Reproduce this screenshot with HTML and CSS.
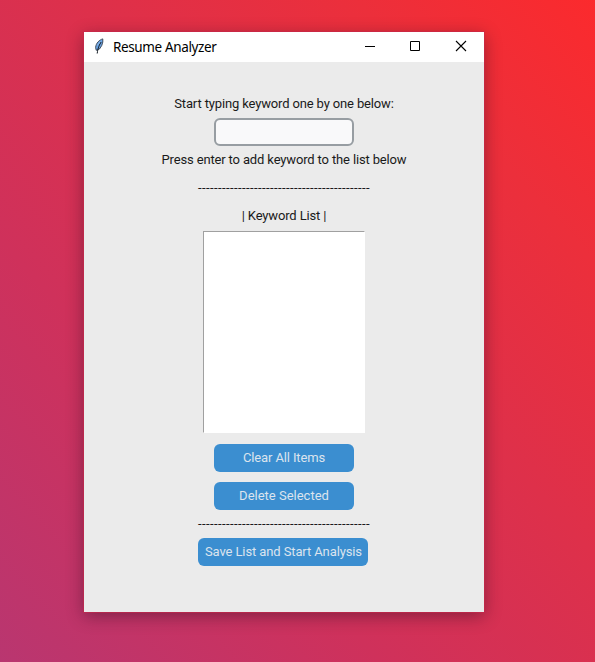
FILE: index.html
```html
<!DOCTYPE html>
<html lang="en">
<head>
<meta charset="utf-8">
<title>Resume Analyzer</title>
<link rel="stylesheet" href="styles.css">
</head>
<body>
<main class="window">
  <header class="titlebar">
    <svg class="feather" width="12" height="16" viewBox="0 0 12 16">
      <path d="M9.8 0.900C6.400 1.8 3 5 2.600 9.500L3.200 12.300L6.500 11L8.800 7.400L9.800 4Z" fill="#6ba3e2" stroke="#34404f" stroke-width="0.9"/>
      <path d="M8.200 4C6.500 6.500 4.900 9.500 4.200 15.500" fill="none" stroke="#101820" stroke-width="1"/>
      <path d="M4.400 7.500L7.200 3.600" stroke="#8bb8ea" stroke-width="1"/>
    </svg>
    <h1 class="title">Resume Analyzer</h1>
    <nav class="controls">
      <svg width="46" height="30" viewBox="0 0 46 30"><path d="M19 14.500H29" stroke="#000"/></svg>
      <svg width="46" height="30" viewBox="0 0 46 30"><path d="M18.500 9.500H27.500V18.500H18.500Z" fill="none" stroke="#000"/></svg>
      <svg width="46" height="30" viewBox="0 0 46 30"><path d="M18 9L28 19M28 9L18 19" stroke="#000" stroke-width="1.1"/></svg>
    </nav>
  </header>
  <section class="content">
    <label class="label" for="keyword">Start typing keyword one by one below:</label>
    <input class="entry" id="keyword" type="text">
    <p class="label">Press enter to add keyword to the list below</p>
    <p class="label dashes">-------------------------------------------</p>
    <p class="label">| Keyword List |</p>
    <div class="listbox"></div>
    <button class="button clear">Clear All Items</button>
    <button class="button delete">Delete Selected</button>
    <p class="label dashes">-------------------------------------------</p>
    <button class="button save">Save List and Start Analysis</button>
  </section>
</main>
</body>
</html>
```
FILE: styles.css
```css
* {
  box-sizing: border-box;
}

body {
  margin: 0;
  height: 662px;
  padding: 32px 0 0 84px;
  overflow: hidden;
  background: linear-gradient(to top right, #b93670 0%, #cf315b 32%, #de304a 58%, #ec2f3b 80%, #fb2a2d 100%);
  font-family: Roboto, "Liberation Sans", sans-serif;
}

.window {
  width: 400px;
  height: 580px;
  background: #ebebeb;
  box-shadow: 0 0 0 1px rgba(200, 40, 75, 0.6), 0 4px 16px rgba(40, 10, 30, 0.45);
}

.titlebar {
  display: flex;
  align-items: center;
  height: 30px;
  padding-left: 9px;
  background: #fff;
}

.feather {
  margin-right: 8px;
  margin-top: -2px;
}

.title {
  flex: 1;
  margin: 0;
  font: 400 13.5px/30px "Noto Sans", sans-serif;
  letter-spacing: -0.37px;
  color: #000;
}

.controls {
  display: flex;
}

.content {
  display: flex;
  flex-direction: column;
  align-items: center;
  padding-top: 28px;
}

.label {
  height: 28px;
  margin: 0;
  font-size: 13px;
  line-height: 28px;
  letter-spacing: -0.145px;
  color: #1a1a1a;
  white-space: nowrap;
}

.entry {
  width: 140px;
  height: 28px;
  padding: 0 6px;
  border: 2px solid #979da2;
  border-radius: 6px;
  background: #f9f9fa;
  outline: none;
}

.dashes {
  width: 172px;
  letter-spacing: 0.41px;
}

.listbox {
  width: 162px;
  height: 202px;
  margin: 1px 0 11px;
  border: 1px solid;
  border-color: #a0a0a0 #fff #fff #a0a0a0;
  background: #fff;
}

.button {
  width: 140px;
  height: 28px;
  padding: 0;
  border: 0;
  border-radius: 6px;
  background: #3b8ed0;
  color: #dce4ee;
  font: 400 13px/28px Roboto, sans-serif;
  white-space: nowrap;
}

.clear {
  letter-spacing: -0.13px;
}

.delete {
  margin-top: 10px;
}

.save {
  width: 170px;
  margin-right: 2px;
  padding-left: 1px;
  letter-spacing: -0.11px;
}
```
